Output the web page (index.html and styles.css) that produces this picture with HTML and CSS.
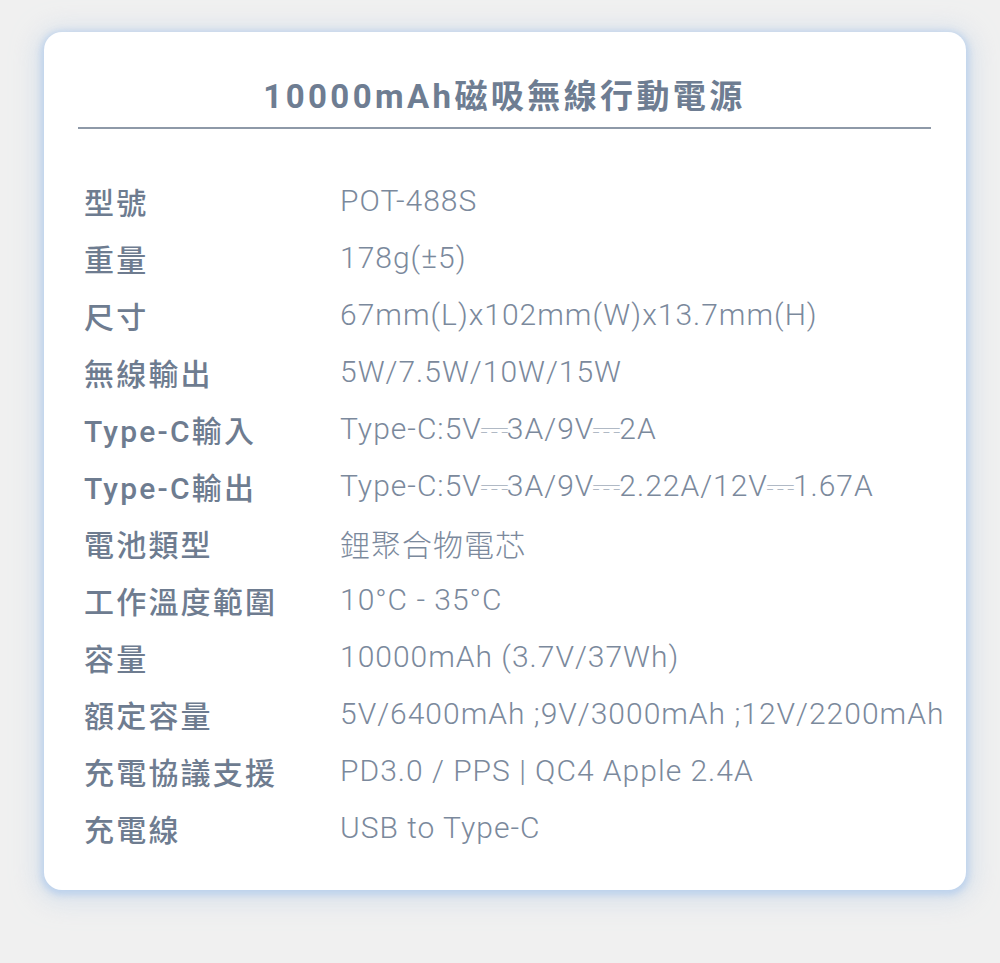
FILE: index.html
```html
<!DOCTYPE html>
<html lang="zh-Hant">
<head>
<meta charset="utf-8">
<link rel="stylesheet" href="styles.css">
</head>
<body>
<div class="card">
  <h1 class="title">10000mAh磁吸無線行動電源</h1>
  <div class="specs">
    <div class="row"><div class="label">型號</div><div class="value">POT-488S</div></div>
    <div class="row"><div class="label">重量</div><div class="value">178g(±5)</div></div>
    <div class="row"><div class="label">尺寸</div><div class="value">67mm(L)x102mm(W)x13.7mm(H)</div></div>
    <div class="row"><div class="label">無線輸出</div><div class="value">5W/7.5W/10W/15W</div></div>
    <div class="row"><div class="label">Type-C輸入</div><div class="value">Type-C:5V<span class="dc">⎓</span>3A/9V<span class="dc">⎓</span>2A</div></div>
    <div class="row"><div class="label">Type-C輸出</div><div class="value">Type-C:5V<span class="dc">⎓</span>3A/9V<span class="dc">⎓</span>2.22A/12V<span class="dc">⎓</span>1.67A</div></div>
    <div class="row"><div class="label">電池類型</div><div class="value">鋰聚合物電芯</div></div>
    <div class="row"><div class="label">工作溫度範圍</div><div class="value">10°C - 35°C</div></div>
    <div class="row"><div class="label">容量</div><div class="value">10000mAh (3.7V/37Wh)</div></div>
    <div class="row"><div class="label">額定容量</div><div class="value">5V/6400mAh ;9V/3000mAh ;12V/2200mAh</div></div>
    <div class="row"><div class="label">充電協議支援</div><div class="value">PD3.0 / PPS | QC4 Apple 2.4A</div></div>
    <div class="row"><div class="label">充電線</div><div class="value">USB to Type-C</div></div>
  </div>
</div>
</body>
</html>
```
FILE: styles.css
```css
html, body {
  margin: 0;
  padding: 0;
  background: #f0f0f0;
}
body {
  padding: 32px 34px 0 44px;
  height: 963px;
  box-sizing: border-box;
  font-family: Roboto, "Noto Sans CJK TC", sans-serif;
  color: #6e7c90;
}
.card {
  width: 922px;
  height: 858px;
  box-sizing: border-box;
  background: #ffffff;
  border-radius: 18px;
  box-shadow: 0 2px 6px 3px rgba(186, 208, 236, 0.9), 0 4px 22px 10px rgba(205, 218, 234, 0.6);
  padding: 0 35px 0 34px;
}
.title {
  margin: 0;
  padding-top: 42px;
  padding-bottom: 7px;
  text-align: center;
  font-size: 33px;
  font-weight: 700;
  line-height: 46px;
  letter-spacing: 3.4px;
  color: #6e7d92;
  border-bottom: 2px solid #8e99a8;
}
.specs {
  padding-top: 43px;
  padding-left: 6px;
}
.row {
  display: flex;
  height: 57px;
  align-items: center;
}
.label {
  width: 256px;
  flex: none;
  font-size: 30px;
  font-weight: 500;
  letter-spacing: 2.2px;
  color: #6e7c90;
}
.value {
  font-size: 30px;
  font-weight: 300;
  letter-spacing: 1px;
  white-space: nowrap;
  color: #7b899c;
}
.dc {
  display: inline-block;
  font-family: "DejaVu Sans", sans-serif;
  font-size: 30px;
  color: #b0b9c5;
  transform: scaleX(1.2);
}
```
